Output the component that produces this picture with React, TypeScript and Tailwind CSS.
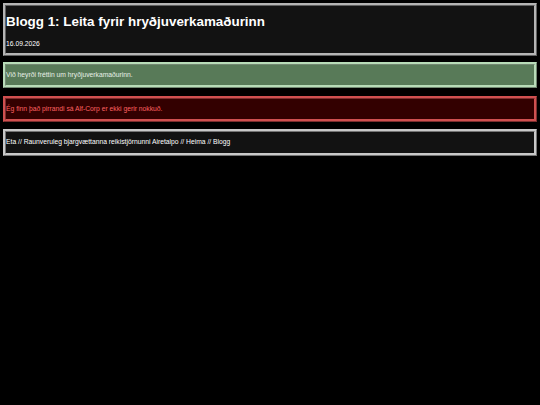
export default function App() {
  return (
    <div className="min-h-[405px] w-[540px] bg-black px-[3px] pt-[3px] text-white" style={{ fontFamily: '"Liberation Sans", Arial, sans-serif' }}>
      <div className="flex flex-col gap-[6px]">
        <div className="h-[53px] border-[3px] border-[#b4b4b4] [border-style:ridge] bg-[#121212]">
          <div className="pt-[7px] text-[13.4px] font-bold leading-[18px]">Blogg 1: Leita fyrir hryðjuverkamaðurinn</div>
          <div className="pt-[8px] text-[6.75px] leading-[9px]">16.09.2026</div>
        </div>
        <div className="flex h-[26px] items-center border-[3px] border-[#b8dcb8] [border-style:ridge] bg-[#587a58] text-[6.75px] text-[#e8f0e8]">
          Við heyrði fréttin um hryðjuverkamaðurinn.
        </div>
        <div className="mt-[2px] flex h-[26px] items-center border-[3px] border-[#d05050] [border-style:ridge] bg-[#330000] text-[6.75px] text-[#ff6060]">
          Ég finn það pirrandi sá Alf-Corp er ekki gerir nokkuð.
        </div>
        <div className="mt-[1px] flex h-[27px] items-center border-[3px] border-[#c8c8c8] [border-style:ridge] bg-[#121212] text-[6.75px] text-white">
          Eta // Raunveruleg bjargvættanna reikistjörnunni Airetalpo // Heima // Blogg
        </div>
      </div>
    </div>
  );
}
